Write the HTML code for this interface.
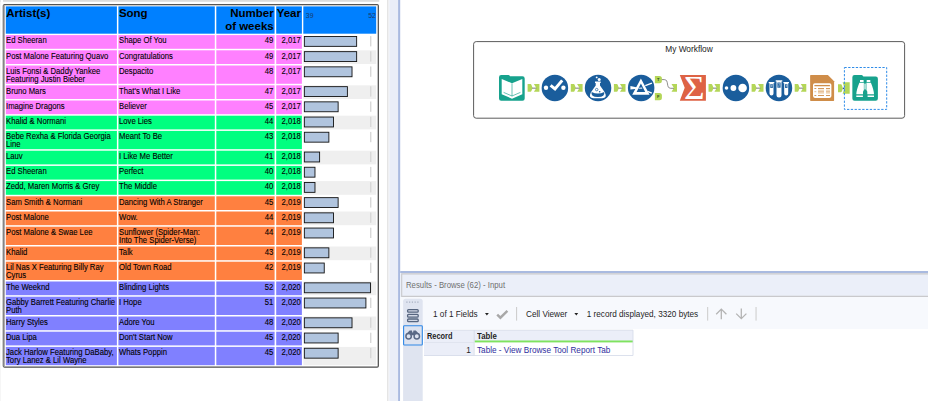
<!DOCTYPE html>
<html lang="en"><head><meta charset="utf-8"><title>My Workflow - Browse</title>
<style>
html,body{margin:0;padding:0;background:#fff;}
body{width:928px;height:401px;overflow:hidden;position:relative;font-family:"Liberation Sans",Arial,sans-serif;}
#shapes{position:absolute;left:0;top:0;}
.t{position:absolute;white-space:nowrap;color:#000;}
.h{font-weight:bold;font-size:11.5px;line-height:13.0px;}
.d{font-size:8.3px;line-height:8.2px;-webkit-text-stroke:0.1px #000;transform:scaleX(.928);transform-origin:0 0;}
.dr{transform-origin:100% 0;}
.ax{font-size:6.9px;line-height:7px;color:#1b3a6a;}
.u{font-size:8.2px;line-height:10px;color:#1e1e1e;}
</style></head><body>
<svg id="shapes" width="928" height="401" viewBox="0 0 928 401">
<rect x="0.00" y="0.00" width="1.00" height="2.00" fill="#dcdcdc" />
<rect x="3.00" y="0.00" width="376.30" height="1.80" fill="#dcdcdc" />
<rect x="0.00" y="0.00" width="0.60" height="401.00" fill="#f0f0f0" />
<rect x="3.45" y="4.55" width="374.85" height="362.6" rx="1.2" fill="#fff" stroke="#4c4c4c" stroke-width="1.25"/>
<rect x="2.80" y="5.20" width="1.30" height="361.40" fill="#858585" />
<rect x="4.10" y="5.20" width="0.90" height="361.20" fill="#aaa5aa" />
<path d="M5.0 5.4H377.6" fill="none" stroke="#d9ccbe" stroke-width="0.6"/>
<rect x="5.80" y="6.40" width="111.10" height="27.30" fill="#0080FF" />
<rect x="118.40" y="6.40" width="96.40" height="27.30" fill="#0080FF" />
<rect x="216.30" y="6.40" width="58.30" height="27.30" fill="#0080FF" />
<rect x="276.20" y="6.40" width="25.70" height="27.30" fill="#0080FF" />
<rect x="303.30" y="6.40" width="72.90" height="27.30" fill="#0080FF" />
<rect x="5.80" y="35.10" width="111.10" height="13.70" fill="#FF80FF" />
<rect x="118.40" y="35.10" width="96.40" height="13.70" fill="#FF80FF" />
<rect x="216.30" y="35.10" width="58.30" height="13.70" fill="#FF80FF" />
<rect x="276.20" y="35.10" width="25.70" height="13.70" fill="#FF80FF" />
<rect x="370.00" y="36.10" width="1.40" height="10.30" fill="#d8d8d8" />
<rect x="304.35" y="36.45" width="52.30" height="9.90" fill="#B0C4DE" stroke="#111" stroke-width="0.9"/>
<rect x="5.80" y="50.30" width="111.10" height="13.70" fill="#FF80FF" />
<rect x="118.40" y="50.30" width="96.40" height="13.70" fill="#FF80FF" />
<rect x="216.30" y="50.30" width="58.30" height="13.70" fill="#FF80FF" />
<rect x="276.20" y="50.30" width="25.70" height="13.70" fill="#FF80FF" />
<rect x="303.30" y="50.30" width="72.90" height="13.70" fill="#efefef" />
<rect x="370.00" y="51.30" width="1.40" height="10.30" fill="#d8d8d8" />
<rect x="304.35" y="51.65" width="52.30" height="9.90" fill="#B0C4DE" stroke="#111" stroke-width="0.9"/>
<rect x="5.80" y="65.50" width="111.10" height="18.30" fill="#FF80FF" />
<rect x="118.40" y="65.50" width="96.40" height="18.30" fill="#FF80FF" />
<rect x="216.30" y="65.50" width="58.30" height="18.30" fill="#FF80FF" />
<rect x="276.20" y="65.50" width="25.70" height="18.30" fill="#FF80FF" />
<rect x="370.00" y="66.50" width="1.40" height="10.30" fill="#d8d8d8" />
<rect x="304.35" y="66.85" width="47.67" height="9.90" fill="#B0C4DE" stroke="#111" stroke-width="0.9"/>
<rect x="5.80" y="85.30" width="111.10" height="13.70" fill="#FF80FF" />
<rect x="118.40" y="85.30" width="96.40" height="13.70" fill="#FF80FF" />
<rect x="216.30" y="85.30" width="58.30" height="13.70" fill="#FF80FF" />
<rect x="276.20" y="85.30" width="25.70" height="13.70" fill="#FF80FF" />
<rect x="303.30" y="85.30" width="72.90" height="13.70" fill="#efefef" />
<rect x="370.00" y="86.30" width="1.40" height="10.30" fill="#d8d8d8" />
<rect x="304.35" y="86.65" width="43.04" height="9.90" fill="#B0C4DE" stroke="#111" stroke-width="0.9"/>
<rect x="5.80" y="100.50" width="111.10" height="13.70" fill="#FF80FF" />
<rect x="118.40" y="100.50" width="96.40" height="13.70" fill="#FF80FF" />
<rect x="216.30" y="100.50" width="58.30" height="13.70" fill="#FF80FF" />
<rect x="276.20" y="100.50" width="25.70" height="13.70" fill="#FF80FF" />
<rect x="370.00" y="101.50" width="1.40" height="10.30" fill="#d8d8d8" />
<rect x="304.35" y="101.85" width="33.78" height="9.90" fill="#B0C4DE" stroke="#111" stroke-width="0.9"/>
<rect x="5.80" y="115.70" width="111.10" height="13.70" fill="#00FF80" />
<rect x="118.40" y="115.70" width="96.40" height="13.70" fill="#00FF80" />
<rect x="216.30" y="115.70" width="58.30" height="13.70" fill="#00FF80" />
<rect x="276.20" y="115.70" width="25.70" height="13.70" fill="#00FF80" />
<rect x="303.30" y="115.70" width="72.90" height="13.70" fill="#efefef" />
<rect x="370.00" y="116.70" width="1.40" height="10.30" fill="#d8d8d8" />
<rect x="304.35" y="117.05" width="29.15" height="9.90" fill="#B0C4DE" stroke="#111" stroke-width="0.9"/>
<rect x="5.80" y="130.90" width="111.10" height="18.30" fill="#00FF80" />
<rect x="118.40" y="130.90" width="96.40" height="18.30" fill="#00FF80" />
<rect x="216.30" y="130.90" width="58.30" height="18.30" fill="#00FF80" />
<rect x="276.20" y="130.90" width="25.70" height="18.30" fill="#00FF80" />
<rect x="370.00" y="131.90" width="1.40" height="10.30" fill="#d8d8d8" />
<rect x="304.35" y="132.25" width="24.52" height="9.90" fill="#B0C4DE" stroke="#111" stroke-width="0.9"/>
<rect x="5.80" y="150.70" width="111.10" height="13.70" fill="#00FF80" />
<rect x="118.40" y="150.70" width="96.40" height="13.70" fill="#00FF80" />
<rect x="216.30" y="150.70" width="58.30" height="13.70" fill="#00FF80" />
<rect x="276.20" y="150.70" width="25.70" height="13.70" fill="#00FF80" />
<rect x="303.30" y="150.70" width="72.90" height="13.70" fill="#efefef" />
<rect x="370.00" y="151.70" width="1.40" height="10.30" fill="#d8d8d8" />
<rect x="304.35" y="152.05" width="15.26" height="9.90" fill="#B0C4DE" stroke="#111" stroke-width="0.9"/>
<rect x="5.80" y="165.90" width="111.10" height="13.70" fill="#00FF80" />
<rect x="118.40" y="165.90" width="96.40" height="13.70" fill="#00FF80" />
<rect x="216.30" y="165.90" width="58.30" height="13.70" fill="#00FF80" />
<rect x="276.20" y="165.90" width="25.70" height="13.70" fill="#00FF80" />
<rect x="370.00" y="166.90" width="1.40" height="10.30" fill="#d8d8d8" />
<rect x="304.35" y="167.25" width="10.63" height="9.90" fill="#B0C4DE" stroke="#111" stroke-width="0.9"/>
<rect x="5.80" y="181.10" width="111.10" height="13.70" fill="#00FF80" />
<rect x="118.40" y="181.10" width="96.40" height="13.70" fill="#00FF80" />
<rect x="216.30" y="181.10" width="58.30" height="13.70" fill="#00FF80" />
<rect x="276.20" y="181.10" width="25.70" height="13.70" fill="#00FF80" />
<rect x="303.30" y="181.10" width="72.90" height="13.70" fill="#efefef" />
<rect x="370.00" y="182.10" width="1.40" height="10.30" fill="#d8d8d8" />
<rect x="304.35" y="182.45" width="10.63" height="9.90" fill="#B0C4DE" stroke="#111" stroke-width="0.9"/>
<rect x="5.80" y="196.30" width="111.10" height="13.70" fill="#FF8040" />
<rect x="118.40" y="196.30" width="96.40" height="13.70" fill="#FF8040" />
<rect x="216.30" y="196.30" width="58.30" height="13.70" fill="#FF8040" />
<rect x="276.20" y="196.30" width="25.70" height="13.70" fill="#FF8040" />
<rect x="370.00" y="197.30" width="1.40" height="10.30" fill="#d8d8d8" />
<rect x="304.35" y="197.65" width="33.78" height="9.90" fill="#B0C4DE" stroke="#111" stroke-width="0.9"/>
<rect x="5.80" y="211.50" width="111.10" height="13.70" fill="#FF8040" />
<rect x="118.40" y="211.50" width="96.40" height="13.70" fill="#FF8040" />
<rect x="216.30" y="211.50" width="58.30" height="13.70" fill="#FF8040" />
<rect x="276.20" y="211.50" width="25.70" height="13.70" fill="#FF8040" />
<rect x="303.30" y="211.50" width="72.90" height="13.70" fill="#efefef" />
<rect x="370.00" y="212.50" width="1.40" height="10.30" fill="#d8d8d8" />
<rect x="304.35" y="212.85" width="29.15" height="9.90" fill="#B0C4DE" stroke="#111" stroke-width="0.9"/>
<rect x="5.80" y="226.70" width="111.10" height="18.30" fill="#FF8040" />
<rect x="118.40" y="226.70" width="96.40" height="18.30" fill="#FF8040" />
<rect x="216.30" y="226.70" width="58.30" height="18.30" fill="#FF8040" />
<rect x="276.20" y="226.70" width="25.70" height="18.30" fill="#FF8040" />
<rect x="370.00" y="227.70" width="1.40" height="10.30" fill="#d8d8d8" />
<rect x="304.35" y="228.05" width="29.15" height="9.90" fill="#B0C4DE" stroke="#111" stroke-width="0.9"/>
<rect x="5.80" y="246.50" width="111.10" height="13.70" fill="#FF8040" />
<rect x="118.40" y="246.50" width="96.40" height="13.70" fill="#FF8040" />
<rect x="216.30" y="246.50" width="58.30" height="13.70" fill="#FF8040" />
<rect x="276.20" y="246.50" width="25.70" height="13.70" fill="#FF8040" />
<rect x="303.30" y="246.50" width="72.90" height="13.70" fill="#efefef" />
<rect x="370.00" y="247.50" width="1.40" height="10.30" fill="#d8d8d8" />
<rect x="304.35" y="247.85" width="24.52" height="9.90" fill="#B0C4DE" stroke="#111" stroke-width="0.9"/>
<rect x="5.80" y="261.70" width="111.10" height="18.30" fill="#FF8040" />
<rect x="118.40" y="261.70" width="96.40" height="18.30" fill="#FF8040" />
<rect x="216.30" y="261.70" width="58.30" height="18.30" fill="#FF8040" />
<rect x="276.20" y="261.70" width="25.70" height="18.30" fill="#FF8040" />
<rect x="370.00" y="262.70" width="1.40" height="10.30" fill="#d8d8d8" />
<rect x="304.35" y="263.05" width="19.89" height="9.90" fill="#B0C4DE" stroke="#111" stroke-width="0.9"/>
<rect x="5.80" y="281.50" width="111.10" height="13.70" fill="#8080FF" />
<rect x="118.40" y="281.50" width="96.40" height="13.70" fill="#8080FF" />
<rect x="216.30" y="281.50" width="58.30" height="13.70" fill="#8080FF" />
<rect x="276.20" y="281.50" width="25.70" height="13.70" fill="#8080FF" />
<rect x="303.30" y="281.50" width="72.90" height="13.70" fill="#efefef" />
<rect x="370.00" y="282.50" width="1.40" height="10.30" fill="#d8d8d8" />
<rect x="304.35" y="282.85" width="66.19" height="9.90" fill="#B0C4DE" stroke="#111" stroke-width="0.9"/>
<rect x="5.80" y="296.70" width="111.10" height="18.30" fill="#8080FF" />
<rect x="118.40" y="296.70" width="96.40" height="18.30" fill="#8080FF" />
<rect x="216.30" y="296.70" width="58.30" height="18.30" fill="#8080FF" />
<rect x="276.20" y="296.70" width="25.70" height="18.30" fill="#8080FF" />
<rect x="370.00" y="297.70" width="1.40" height="10.30" fill="#d8d8d8" />
<rect x="304.35" y="298.05" width="61.56" height="9.90" fill="#B0C4DE" stroke="#111" stroke-width="0.9"/>
<rect x="5.80" y="316.50" width="111.10" height="13.70" fill="#8080FF" />
<rect x="118.40" y="316.50" width="96.40" height="13.70" fill="#8080FF" />
<rect x="216.30" y="316.50" width="58.30" height="13.70" fill="#8080FF" />
<rect x="276.20" y="316.50" width="25.70" height="13.70" fill="#8080FF" />
<rect x="303.30" y="316.50" width="72.90" height="13.70" fill="#efefef" />
<rect x="370.00" y="317.50" width="1.40" height="10.30" fill="#d8d8d8" />
<rect x="304.35" y="317.85" width="47.67" height="9.90" fill="#B0C4DE" stroke="#111" stroke-width="0.9"/>
<rect x="5.80" y="331.70" width="111.10" height="13.70" fill="#8080FF" />
<rect x="118.40" y="331.70" width="96.40" height="13.70" fill="#8080FF" />
<rect x="216.30" y="331.70" width="58.30" height="13.70" fill="#8080FF" />
<rect x="276.20" y="331.70" width="25.70" height="13.70" fill="#8080FF" />
<rect x="370.00" y="332.70" width="1.40" height="10.30" fill="#d8d8d8" />
<rect x="304.35" y="333.05" width="33.78" height="9.90" fill="#B0C4DE" stroke="#111" stroke-width="0.9"/>
<rect x="5.80" y="346.90" width="111.10" height="18.30" fill="#8080FF" />
<rect x="118.40" y="346.90" width="96.40" height="18.30" fill="#8080FF" />
<rect x="216.30" y="346.90" width="58.30" height="18.30" fill="#8080FF" />
<rect x="276.20" y="346.90" width="25.70" height="18.30" fill="#8080FF" />
<rect x="303.30" y="346.90" width="72.90" height="18.30" fill="#efefef" />
<rect x="370.00" y="347.90" width="1.40" height="10.30" fill="#d8d8d8" />
<rect x="304.35" y="348.25" width="33.78" height="9.90" fill="#B0C4DE" stroke="#111" stroke-width="0.9"/>
<rect x="387.00" y="0.00" width="1.20" height="401.00" fill="#e5e5e5" />
<rect x="388.20" y="0.00" width="1.10" height="401.00" fill="#eeeef0" />
<rect x="389.30" y="0.00" width="8.90" height="401.00" fill="#EAEEF8" />
<rect x="398.10" y="0.00" width="2.10" height="401.00" fill="#A9BAE0" />
<rect x="400.20" y="271.00" width="527.80" height="2.00" fill="#A9BAE0" />
<rect x="400.20" y="273.00" width="527.80" height="24.00" fill="#EBEFF9" />
<path d="M928 273.9H401.7V296.4H928" fill="none" stroke="#c9c9cc" stroke-width="1.1"/>
<rect x="400.20" y="297.00" width="527.80" height="32.00" fill="#F7F9FD" />
<rect x="400.20" y="329.00" width="527.80" height="72.00" fill="#ffffff" />
<path d="M403.1 401V301.2Q403.1 298.7 405.6 298.7H420.2Q422.7 298.7 422.7 301.2V401Z" fill="#DFE4F0"/>
<rect x="406.30" y="301.60" width="1.20" height="1.00" fill="#9aa3b5" />
<rect x="409.05" y="301.60" width="1.20" height="1.00" fill="#9aa3b5" />
<rect x="411.80" y="301.60" width="1.20" height="1.00" fill="#9aa3b5" />
<rect x="414.55" y="301.60" width="1.20" height="1.00" fill="#9aa3b5" />
<rect x="417.30" y="301.60" width="1.20" height="1.00" fill="#9aa3b5" />
<rect x="407.6" y="309.6" width="10.6" height="2.6" rx="0.9" fill="#d3d9e6" stroke="#56657f" stroke-width="1.3"/>
<rect x="407.6" y="314.45" width="10.6" height="2.6" rx="0.9" fill="#d3d9e6" stroke="#56657f" stroke-width="1.3"/>
<rect x="407.6" y="319.0" width="10.6" height="2.6" rx="0.9" fill="#d3d9e6" stroke="#56657f" stroke-width="1.3"/>
<rect x="403.6" y="325.8" width="18.7" height="19.2" rx="0.8" fill="#DDE3F0" stroke="#3088E6" stroke-width="1.1"/>
<g fill="#DDE3F0" stroke="#5a6985" stroke-width="1.5"><circle cx="408.6" cy="336.3" r="2.7"/><circle cx="416.8" cy="336.3" r="2.7"/></g>
<path d="M409.6 330.4H412.0L412.3 332.6H413.1L413.4 330.4H415.8L419.6 334.6L416.8 332.9L413.6 335.2H411.8L408.6 332.9L405.8 334.6Z" fill="#5a6985"/>
<rect x="424.00" y="330.20" width="209.00" height="12.20" fill="#EBEEF8" />
<rect x="424.00" y="342.40" width="50.00" height="13.10" fill="#EBEEF8" />
<rect x="474.60" y="342.40" width="158.40" height="13.10" fill="#ffffff" />
<rect x="474.60" y="340.50" width="158.40" height="1.90" fill="#7FE35F" />
<path d="M424 330.2H633V355.5H424M474.2 330.2V355.5" fill="none" stroke="#D3D9E8" stroke-width="0.8"/>
<path d="M424 342.5H474" fill="none" stroke="#D9DEEA" stroke-width="0.7"/>
<path d="M485.0 312.9H488.8L486.9 315.4Z" fill="#222"/>
<path d="M574.4 312.9H578.2L576.3 315.4Z" fill="#222"/>
<path d="M497.2 314.6L500.4 317.7L507.4 310.8" fill="none" stroke="#A8A8A8" stroke-width="2.4"/>
<rect x="516.00" y="307.00" width="1.10" height="13.60" fill="#cfcfcf" />
<rect x="707.10" y="307.00" width="1.10" height="13.60" fill="#cfcfcf" />
<rect x="755.50" y="307.00" width="1.10" height="13.60" fill="#cfcfcf" />
<path d="M721.3 319.2V309.2M716.2 314.2L721.3 309.1L726.4 314.2" fill="none" stroke="#b4b4b4" stroke-width="1.3"/>
<path d="M741.3 308.6V318.6M736.2 313.6L741.3 318.7L746.4 313.6" fill="none" stroke="#b4b4b4" stroke-width="1.3"/>
<rect x="473.6" y="41.6" width="431.0" height="76.6" rx="2.6" fill="#fff" stroke="#5c5c5c" stroke-width="1"/>
<path d="M527.60 84.1H530.50Q531.20 84.1 531.50 85.10L532.60 88.05L531.50 90.80Q531.20 91.8 530.50 91.8H527.60Z" fill="#B4D658"/>
<path d="M533.90 84.1H539.40V91.8H533.90L536.30 88.05Z" fill="#B4D658"/>
<path d="M532.20 88.15H536.30" stroke="#444" stroke-width="0.7" fill="none"/>
<path d="M570.80 84.1H573.70Q574.40 84.1 574.70 85.10L575.80 88.05L574.70 90.80Q574.40 91.8 573.70 91.8H570.80Z" fill="#B4D658"/>
<path d="M577.10 84.1H582.60V91.8H577.10L579.50 88.05Z" fill="#B4D658"/>
<path d="M575.40 88.15H579.50" stroke="#444" stroke-width="0.7" fill="none"/>
<path d="M613.90 84.1H616.80Q617.50 84.1 617.80 85.10L618.90 88.05L617.80 90.80Q617.50 91.8 616.80 91.8H613.90Z" fill="#B4D658"/>
<path d="M620.00 84.1H625.50V91.8H620.00L622.40 88.05Z" fill="#B4D658"/>
<path d="M618.50 88.15H622.40" stroke="#444" stroke-width="0.7" fill="none"/>
<path d="M708.50 84.1H711.40Q712.10 84.1 712.40 85.10L713.50 88.05L712.40 90.80Q712.10 91.8 711.40 91.8H708.50Z" fill="#B4D658"/>
<path d="M714.40 84.1H719.90V91.8H714.40L716.80 88.05Z" fill="#B4D658"/>
<path d="M713.10 88.15H716.80" stroke="#444" stroke-width="0.7" fill="none"/>
<path d="M751.60 84.1H754.50Q755.20 84.1 755.50 85.10L756.60 88.05L755.50 90.80Q755.20 91.8 754.50 91.8H751.60Z" fill="#B4D658"/>
<path d="M758.00 84.1H763.50V91.8H758.00L760.40 88.05Z" fill="#B4D658"/>
<path d="M756.20 88.15H760.40" stroke="#444" stroke-width="0.7" fill="none"/>
<path d="M794.70 84.1H797.60Q798.30 84.1 798.60 85.10L799.70 88.05L798.60 90.80Q798.30 91.8 797.60 91.8H794.70Z" fill="#B4D658"/>
<path d="M800.80 84.1H806.30V91.8H800.80L803.20 88.05Z" fill="#B4D658"/>
<path d="M799.30 88.15H803.20" stroke="#444" stroke-width="0.7" fill="none"/>
<path d="M654.9 75.9H659.4Q661.9 75.9 661.9 78.4V80.7Q661.9 83.2 659.4 83.2H654.9Z" fill="#B4D658"/>
<path d="M654.9 93.0H659.4Q661.9 93.0 661.9 95.5V97.8Q661.9 100.3 659.4 100.3H654.9Z" fill="#B4D658"/>
<text x="658.3" y="80.9" font-family="Liberation Sans, Arial, sans-serif" font-size="4.1" font-weight="bold" fill="#2c4a1c" text-anchor="middle">T</text>
<text x="658.3" y="98.0" font-family="Liberation Sans, Arial, sans-serif" font-size="4.1" font-weight="bold" fill="#2c4a1c" text-anchor="middle">F</text>
<path d="M671.50 84.1H677.00V91.8H671.50L673.90 88.05Z" fill="#B4D658"/>
<path d="M661.9 79.6H664.3C669.3 79.6 665.7 88.3 670.7 88.3H674" stroke="#6e6e6e" stroke-width="0.8" fill="none"/>
<path d="M838.00 84.3H840.90Q841.60 84.3 841.90 85.30L843.00 88.40L841.90 91.30Q841.60 92.3 840.90 92.3H838.00Z" fill="#B4D658"/>
<path d="M842.6 82.3H849.7V93.7H842.6L844.6 88Z" fill="#B4D658"/>
<circle cx="843.7" cy="88.4" r="0.8" fill="#2340c8"/>
<path d="M499 77.2Q499 75 501.2 75H508.4Q509.4 75 510 76.3H522.5Q524.7 76.3 524.7 78.5V98.5Q524.7 100.7 522.5 100.7H501.2Q499 100.7 499 98.5Z" fill="#17A28D"/>
<path d="M501.7 79L512 83.2L522.3 79V94.3L512 98.7L501.7 94.3Z" fill="#fff"/>
<path d="M512 83.4V96.2M503.6 92.4L512 96L520.4 92.4" stroke="#17A28D" stroke-width="0.65" fill="none"/>
<circle cx="554.9" cy="87.95" r="13.25" fill="#1A5D9C"/>
<circle cx="546.0" cy="87.7" r="2.2" fill="#fff"/><circle cx="563.4" cy="87.7" r="2.2" fill="#fff"/>
<path d="M550.6 85.4L555.0 89.0L562.2 80.4" stroke="#fff" stroke-width="3.0" fill="none"/>
<circle cx="598.05" cy="87.95" r="13.25" fill="#1A5D9C"/>
<path d="M595.0 81.6H600.7V82.9H600.0V85.6L604.9 92.6Q607.6 98.2 602.2 98.2H593.5Q588.1 98.2 590.8 92.6L595.7 85.6V82.9H595.0Z" fill="#fff"/>
<path d="M591.6 91.9Q597.9 95.0 604.2 91.9Q605.4 96.9 597.9 96.9Q590.4 96.9 591.6 91.9Z" fill="#1A5D9C"/>
<circle cx="596.7" cy="89.6" r="1.25" fill="none" stroke="#1A5D9C" stroke-width="0.7"/><circle cx="599.7" cy="91.8" r="0.8" fill="#1A5D9C"/>
<circle cx="596.7" cy="77.4" r="0.95" fill="#fff"/><circle cx="599.2" cy="79.5" r="1.5" fill="#fff"/>
<circle cx="641.15" cy="87.95" r="13.25" fill="#1A5D9C"/>
<path d="M640.9 78.4L649.6 94.7H632.2ZM640.9 83.4L636.6 92.1H645.2Z" fill="#fff" fill-rule="evenodd"/>
<path d="M630.4 85.9L637.4 87.6V88.8L630.4 89.4Z" fill="#fff"/>
<path d="M645.3 85.7L651.9 83.1M647.6 91.3L651.8 93.2" stroke="#fff" stroke-width="1.3" fill="none"/>
<path d="M638.6 87.7L642.2 87.5V88.7L638.6 88.8Z" fill="#e6eef7"/>
<path d="M679.8 75H705.9V100.7H679.8L684.7 87.85Z" fill="#DE6345"/>
<g transform="translate(694.25 99.1) scale(1.06 1)"><text x="0" y="0" font-family="Liberation Serif, Times New Roman, serif" font-size="33.4" fill="#fff" text-anchor="middle">&#931;</text></g>
<circle cx="735.9" cy="87.95" r="13.25" fill="#1A5D9C"/>
<circle cx="726.5" cy="88" r="1.8" fill="#fff"/><circle cx="733.4" cy="88" r="2.9" fill="#fff"/><circle cx="742.6" cy="88" r="4.3" fill="#fff"/>
<circle cx="778.95" cy="87.95" r="13.25" fill="#1A5D9C"/>
<path d="M768.70 82.0H774.30V83.3H773.5V93.50A2.00 2.00 0 0 1 769.5 93.50V83.3H768.70Z" fill="#fff"/>
<path d="M775.70 80.3H782.30V81.6H781.5V95.10A2.50 2.50 0 0 1 776.5 95.10V81.6H775.70Z" fill="#fff"/>
<path d="M783.40 82.0H789.00V83.3H788.2V93.50A2.00 2.00 0 0 1 784.2 93.50V83.3H783.40Z" fill="#fff"/>
<path d="M770.3 84.2H772.8V88.0H770.3Z" fill="#1A5D9C"/>
<path d="M770.85 85.20H772.05L771.25 87.40" stroke="#fff" stroke-width="0.45" fill="none"/>
<path d="M777.4 82.5H780.6V87.7H777.4Z" fill="#1A5D9C"/>
<path d="M778.30 83.50H779.50L778.70 87.10" stroke="#fff" stroke-width="0.45" fill="none"/>
<path d="M785.0 84.2H787.5V88.0H785.0Z" fill="#1A5D9C"/>
<path d="M785.55 85.20H786.75L785.95 87.40" stroke="#fff" stroke-width="0.45" fill="none"/>
<path d="M810.15 75.6Q810.15 75 810.75 75H827.9L834.1 81.2V100.3Q834.1 100.9 833.5 100.9H810.75Q810.15 100.9 810.15 100.3Z" fill="#CF8D49"/>
<rect x="813.0" y="83.2" width="18.4" height="14.7" rx="1.8" fill="#fff"/>
<path d="M814.4 85.6H829.9" stroke="#CF8D49" stroke-width="1.3"/>
<path d="M818 89.6H824V93.8H818ZM826 89.6H830V93.8H826Z" fill="#F1D9BC"/>
<path d="M814.4 88.5H816.3M818 88.5H824M826 88.5H830" stroke="#CF8D49" stroke-width="0.9" fill="none"/>
<path d="M814.4 91.7H816.3M818 91.7H824M826 91.7H830" stroke="#E3B98C" stroke-width="0.9" fill="none"/>
<path d="M814.4 95.5H816.3M818 95.5H824M826 95.5H830" stroke="#CF8D49" stroke-width="0.9" fill="none"/>
<rect x="844.4" y="67.5" width="42.3" height="41.9" fill="none" stroke="#2F8CE8" stroke-width="1" stroke-dasharray="2.3 1.5"/>
<path d="M852.35 77.2Q852.35 75 854.55 75H861.6Q862.7 75 863.4 76.5H875.7Q877.9 76.5 877.9 78.7V98.5Q877.9 100.7 875.7 100.7H854.55Q852.35 100.7 852.35 98.5Z" fill="#17A28D"/>
<path d="M860.0 80H863.6V81.9H860.0ZM866.7 80H870.3V81.9H866.7Z" fill="#fff"/>
<path d="M859.4 82.7H863.9V94.2H856.3Q856.5 89.6 859.4 82.7ZM870.9 82.7H866.4V94.2H874.0Q873.8 89.6 870.9 82.7Z" fill="#fff"/>
<path d="M856.3 95.4H862.9V96.9H856.3ZM867.4 95.4H874.0V96.9H867.4Z" fill="#fff"/>
<path d="M863.9 83.6H866.4V89.4H863.9Z" fill="#8fd3c8"/>
<path d="M865.15 83.6V89.4" stroke="#e9f7f4" stroke-width="0.5"/>
<path d="M863.0 91.7Q863.0 89.9 865.15 89.9Q867.3 89.9 867.3 91.7V97.2H863.0Z" fill="#17A28D"/>
</svg>
<div class="t h" style="top:6.90px;left:6.20px;">Artist(s)</div>
<div class="t h" style="top:6.90px;left:118.90px;">Song</div>
<div class="t h" style="top:6.80px;right:654.30px;text-align:right;">Number<br>of weeks</div>
<div class="t h" style="top:6.80px;left:276.70px;">Year</div>
<div class="t ax" style="top:11.60px;left:305.80px;">39</div>
<div class="t ax" style="top:11.60px;right:552.20px;">52</div>
<div class="t d" style="top:36.40px;left:6.30px;">Ed Sheeran</div>
<div class="t d" style="top:36.40px;left:118.90px;">Shape Of You</div>
<div class="t d dr" style="top:36.40px;right:654.60px;">49</div>
<div class="t d dr" style="top:36.40px;right:627.40px;">2,017</div>
<div class="t d" style="top:51.60px;left:6.30px;">Post Malone Featuring Quavo</div>
<div class="t d" style="top:51.60px;left:118.90px;">Congratulations</div>
<div class="t d dr" style="top:51.60px;right:654.60px;">49</div>
<div class="t d dr" style="top:51.60px;right:627.40px;">2,017</div>
<div class="t d" style="top:66.80px;left:6.30px;">Luis Fonsi &amp; Daddy Yankee<br>Featuring Justin Bieber</div>
<div class="t d" style="top:66.80px;left:118.90px;">Despacito</div>
<div class="t d dr" style="top:66.80px;right:654.60px;">48</div>
<div class="t d dr" style="top:66.80px;right:627.40px;">2,017</div>
<div class="t d" style="top:86.60px;left:6.30px;">Bruno Mars</div>
<div class="t d" style="top:86.60px;left:118.90px;">That's What I Like</div>
<div class="t d dr" style="top:86.60px;right:654.60px;">47</div>
<div class="t d dr" style="top:86.60px;right:627.40px;">2,017</div>
<div class="t d" style="top:101.80px;left:6.30px;">Imagine Dragons</div>
<div class="t d" style="top:101.80px;left:118.90px;">Believer</div>
<div class="t d dr" style="top:101.80px;right:654.60px;">45</div>
<div class="t d dr" style="top:101.80px;right:627.40px;">2,017</div>
<div class="t d" style="top:117.00px;left:6.30px;">Khalid &amp; Normani</div>
<div class="t d" style="top:117.00px;left:118.90px;">Love Lies</div>
<div class="t d dr" style="top:117.00px;right:654.60px;">44</div>
<div class="t d dr" style="top:117.00px;right:627.40px;">2,018</div>
<div class="t d" style="top:132.20px;left:6.30px;">Bebe Rexha &amp; Florida Georgia<br>Line</div>
<div class="t d" style="top:132.20px;left:118.90px;">Meant To Be</div>
<div class="t d dr" style="top:132.20px;right:654.60px;">43</div>
<div class="t d dr" style="top:132.20px;right:627.40px;">2,018</div>
<div class="t d" style="top:152.00px;left:6.30px;">Lauv</div>
<div class="t d" style="top:152.00px;left:118.90px;">I Like Me Better</div>
<div class="t d dr" style="top:152.00px;right:654.60px;">41</div>
<div class="t d dr" style="top:152.00px;right:627.40px;">2,018</div>
<div class="t d" style="top:167.20px;left:6.30px;">Ed Sheeran</div>
<div class="t d" style="top:167.20px;left:118.90px;">Perfect</div>
<div class="t d dr" style="top:167.20px;right:654.60px;">40</div>
<div class="t d dr" style="top:167.20px;right:627.40px;">2,018</div>
<div class="t d" style="top:182.40px;left:6.30px;">Zedd, Maren Morris &amp; Grey</div>
<div class="t d" style="top:182.40px;left:118.90px;">The Middle</div>
<div class="t d dr" style="top:182.40px;right:654.60px;">40</div>
<div class="t d dr" style="top:182.40px;right:627.40px;">2,018</div>
<div class="t d" style="top:197.60px;left:6.30px;">Sam Smith &amp; Normani</div>
<div class="t d" style="top:197.60px;left:118.90px;">Dancing With A Stranger</div>
<div class="t d dr" style="top:197.60px;right:654.60px;">45</div>
<div class="t d dr" style="top:197.60px;right:627.40px;">2,019</div>
<div class="t d" style="top:212.80px;left:6.30px;">Post Malone</div>
<div class="t d" style="top:212.80px;left:118.90px;">Wow.</div>
<div class="t d dr" style="top:212.80px;right:654.60px;">44</div>
<div class="t d dr" style="top:212.80px;right:627.40px;">2,019</div>
<div class="t d" style="top:228.00px;left:6.30px;">Post Malone &amp; Swae Lee</div>
<div class="t d" style="top:228.00px;left:118.90px;">Sunflower (Spider-Man:<br>Into The Spider-Verse)</div>
<div class="t d dr" style="top:228.00px;right:654.60px;">44</div>
<div class="t d dr" style="top:228.00px;right:627.40px;">2,019</div>
<div class="t d" style="top:247.80px;left:6.30px;">Khalid</div>
<div class="t d" style="top:247.80px;left:118.90px;">Talk</div>
<div class="t d dr" style="top:247.80px;right:654.60px;">43</div>
<div class="t d dr" style="top:247.80px;right:627.40px;">2,019</div>
<div class="t d" style="top:263.00px;left:6.30px;">Lil Nas X Featuring Billy Ray<br>Cyrus</div>
<div class="t d" style="top:263.00px;left:118.90px;">Old Town Road</div>
<div class="t d dr" style="top:263.00px;right:654.60px;">42</div>
<div class="t d dr" style="top:263.00px;right:627.40px;">2,019</div>
<div class="t d" style="top:282.80px;left:6.30px;">The Weeknd</div>
<div class="t d" style="top:282.80px;left:118.90px;">Blinding Lights</div>
<div class="t d dr" style="top:282.80px;right:654.60px;">52</div>
<div class="t d dr" style="top:282.80px;right:627.40px;">2,020</div>
<div class="t d" style="top:298.00px;left:6.30px;">Gabby Barrett Featuring Charlie<br>Puth</div>
<div class="t d" style="top:298.00px;left:118.90px;">I Hope</div>
<div class="t d dr" style="top:298.00px;right:654.60px;">51</div>
<div class="t d dr" style="top:298.00px;right:627.40px;">2,020</div>
<div class="t d" style="top:317.80px;left:6.30px;">Harry Styles</div>
<div class="t d" style="top:317.80px;left:118.90px;">Adore You</div>
<div class="t d dr" style="top:317.80px;right:654.60px;">48</div>
<div class="t d dr" style="top:317.80px;right:627.40px;">2,020</div>
<div class="t d" style="top:333.00px;left:6.30px;">Dua Lipa</div>
<div class="t d" style="top:333.00px;left:118.90px;">Don't Start Now</div>
<div class="t d dr" style="top:333.00px;right:654.60px;">45</div>
<div class="t d dr" style="top:333.00px;right:627.40px;">2,020</div>
<div class="t d" style="top:348.20px;left:6.30px;">Jack Harlow Featuring DaBaby,<br>Tory Lanez &amp; Lil Wayne</div>
<div class="t d" style="top:348.20px;left:118.90px;">Whats Poppin</div>
<div class="t d dr" style="top:348.20px;right:654.60px;">45</div>
<div class="t d dr" style="top:348.20px;right:627.40px;">2,020</div>
<div class="t u" style="top:281.00px;left:406.20px;color:#6f6f6f;transform:scaleX(.951);transform-origin:0 0;">Results - Browse (62) - Input</div>
<div class="t u" style="top:310.10px;left:433.00px;">1 of 1 Fields</div>
<div class="t u" style="top:310.10px;left:526.00px;">Cell Viewer</div>
<div class="t u" style="top:310.10px;left:586.70px;">1 record displayed, 3320 bytes</div>
<div class="t u" style="top:331.90px;left:426.60px;font-weight:bold;transform:scaleX(.9);transform-origin:0 0;">Record</div>
<div class="t u" style="top:331.90px;left:477.00px;font-weight:bold;transform:scaleX(.955);transform-origin:0 0;">Table</div>
<div class="t u" style="top:346.10px;right:457.20px;">1</div>
<div class="t u" style="top:346.10px;left:477.00px;color:#2E2E9E;">Table - View Browse Tool Report Tab</div>
<div class="t u" style="top:44.00px;left:665.20px;font-size:8.35px;color:#1c1c1c;">My Workflow</div>
</body></html>
